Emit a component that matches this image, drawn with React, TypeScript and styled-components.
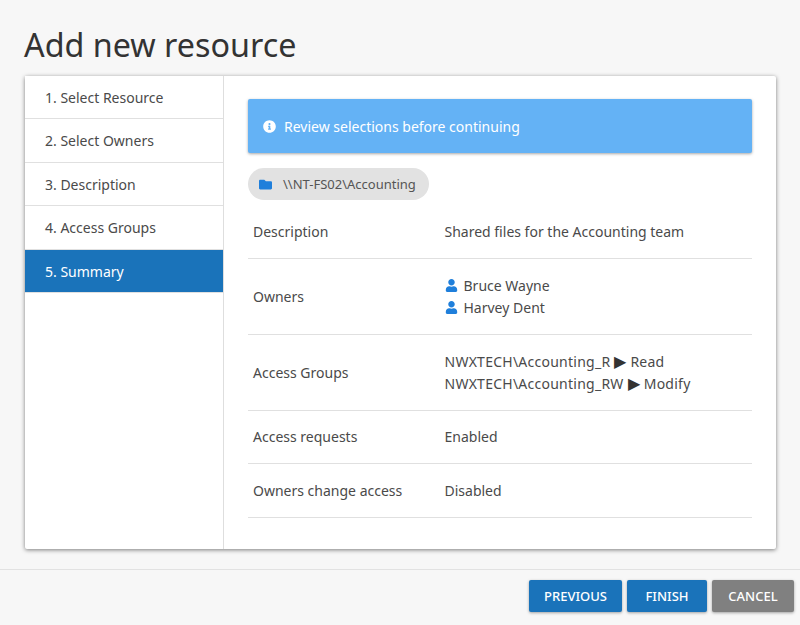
import { FC } from "react";
import styled, { createGlobalStyle } from "styled-components";
import { FaFolder, FaInfoCircle, FaUser } from "react-icons/fa";

const GlobalStyle = createGlobalStyle`
  html, body {
    margin: 0;
    height: 100%;
    background: #f7f7f7;
    font-family: "Noto Sans", "Open Sans", "Liberation Sans", sans-serif;
    color: #333;
  }
`;

const Page = styled.div`
  width: 800px;
  height: 625px;
  display: flex;
  flex-direction: column;
  overflow: hidden;
`;

const Title = styled.h1`
  margin: 0;
  padding: 22px 24px 0 24px;
  height: 53.5px;
  font-size: 32.3px;
  line-height: 44px;
  font-weight: 400;
  color: #333;
`;

const Card = styled.div`
  margin: 0 24px 0 25px;
  height: 473.5px;
  display: flex;
  background: #fff;
  box-shadow: 0 1px 4px rgba(0, 0, 0, 0.5);
  border-radius: 2px;
`;

const Sidebar = styled.ul`
  margin: 0;
  padding: 0;
  list-style: none;
  width: 198px;
  flex-shrink: 0;
  border-right: 1px solid #dedede;
`;

const Step = styled.li<{ $active?: boolean }>`
  height: 43.5px;
  box-sizing: border-box;
  padding: 1px 0 0 20px;
  display: flex;
  align-items: center;
  font-size: 14px;
  color: ${(p) => (p.$active ? "#fff" : "#4a4a4a")};
  background: ${(p) => (p.$active ? "#1a73ba" : "#fff")};
  border-bottom: 1px solid #e0e0e0;
`;

const Content = styled.div`
  flex: 1;
  padding: 23.5px 24px 0 24px;
`;

const Alert = styled.div`
  height: 54px;
  padding-left: 15px;
  display: flex;
  align-items: center;
  gap: 8px;
  background: #64b2f5;
  color: #fff;
  font-size: 14px;
  border-radius: 2px;
  box-shadow: 0 1px 3px rgba(0, 0, 0, 0.35);
`;

const Chip = styled.div`
  margin-top: 15px;
  width: 181px;
  height: 32px;
  box-sizing: border-box;
  padding-left: 11px;
  display: flex;
  align-items: center;
  gap: 11px;
  background: #e2e2e2;
  border-radius: 16px;
  font-size: 13px;
  color: #555;
  svg {
    color: #1f7fdb;
    font-size: 13px;
  }
`;

const Table = styled.div`
  margin-top: 6px;
`;

const Row = styled.div<{ $height: number }>`
  height: ${(p) => p.$height}px;
  box-sizing: border-box;
  display: flex;
  align-items: center;
  border-bottom: 1px solid #e0e0e0;
  font-size: 14px;
  line-height: 22px;
  color: #4a4a4a;
`;

const Label = styled.div`
  width: 191.5px;
  padding-left: 5px;
  flex-shrink: 0;
`;

const Value = styled.div``;

const Owner = styled.div`
  display: flex;
  align-items: center;
  gap: 6px;
  svg {
    color: #1f7fdb;
    font-size: 13px;
  }
`;

const GroupLine = styled.div`
  letter-spacing: 0.25px;
`;

const Arrow = styled.span`
  font-size: 16px;
  line-height: 1;
  color: #333;
`;

const Footer = styled.div`
  margin-top: 20px;
  border-top: 1px solid #e2e2e2;
  padding: 10px 6px 0 0;
  display: flex;
  justify-content: flex-end;
  gap: 5px;
`;

const Button = styled.button<{ $width: number; $grey?: boolean }>`
  width: ${(p) => p.$width}px;
  height: 32px;
  border: 0;
  padding: 0;
  border-radius: 2px;
  background: ${(p) => (p.$grey ? "#808080" : "#1a73ba")};
  color: #fff;
  font-family: inherit;
  font-size: 13px;
  font-weight: 500;
  box-shadow: 0 1px 3px rgba(0, 0, 0, 0.35);
`;

const steps = [
  "1. Select Resource",
  "2. Select Owners",
  "3. Description",
  "4. Access Groups",
  "5. Summary",
];

const App: FC = () => {
  return (
    <Page>
      <GlobalStyle />
      <Title>Add new resource</Title>
      <Card>
        <Sidebar>
          {steps.map((step, i) => (
            <Step key={step} $active={i === 4}>
              {step}
            </Step>
          ))}
        </Sidebar>
        <Content>
          <Alert>
            <FaInfoCircle size={13} />
            Review selections before continuing
          </Alert>
          <Chip>
            <FaFolder />
            \\NT-FS02\Accounting
          </Chip>
          <Table>
            <Row $height={53}>
              <Label>Description</Label>
              <Value>Shared files for the Accounting team</Value>
            </Row>
            <Row $height={76}>
              <Label>Owners</Label>
              <Value>
                <Owner>
                  <FaUser />
                  Bruce Wayne
                </Owner>
                <Owner>
                  <FaUser />
                  Harvey Dent
                </Owner>
              </Value>
            </Row>
            <Row $height={76}>
              <Label>Access Groups</Label>
              <Value>
                <GroupLine>
                  NWXTECH\Accounting_R <Arrow>▶</Arrow> Read
                </GroupLine>
                <GroupLine>
                  NWXTECH\Accounting_RW <Arrow>▶</Arrow> Modify
                </GroupLine>
              </Value>
            </Row>
            <Row $height={53}>
              <Label>Access requests</Label>
              <Value>Enabled</Value>
            </Row>
            <Row $height={54}>
              <Label>Owners change access</Label>
              <Value>Disabled</Value>
            </Row>
          </Table>
        </Content>
      </Card>
      <Footer>
        <Button $width={93}>PREVIOUS</Button>
        <Button $width={80}>FINISH</Button>
        <Button $width={82} $grey>
          CANCEL
        </Button>
      </Footer>
    </Page>
  );
};

export default App;
